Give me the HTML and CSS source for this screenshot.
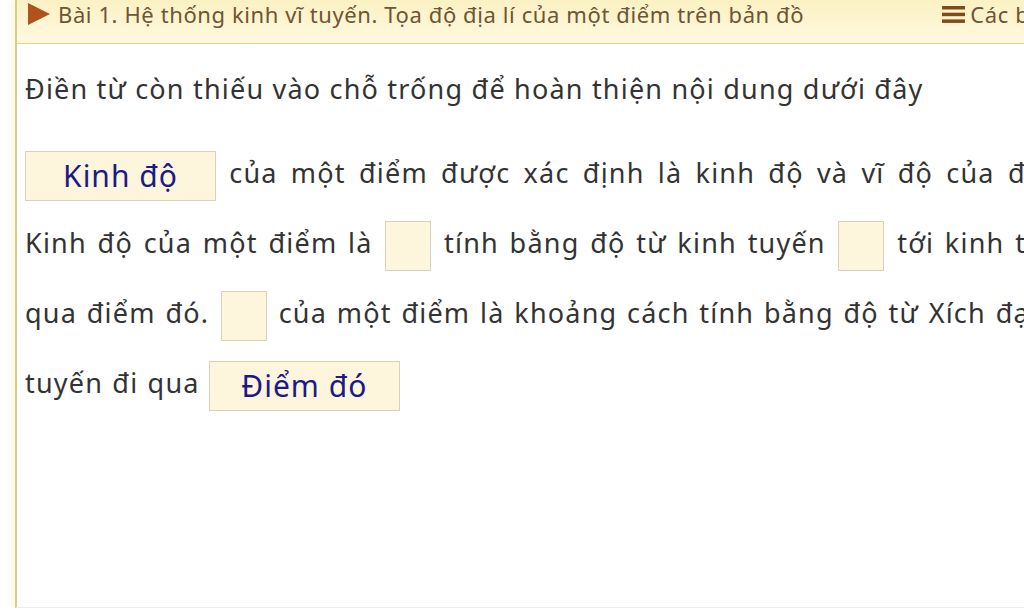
FILE: index.html
```html
<!DOCTYPE html>
<html lang="vi">
  <head>
    <meta charset="UTF-8" />
    <title>Bài 1. Hệ thống kinh vĩ tuyến</title>
    <link rel="stylesheet" href="styles.css">
  </head>
  <body>
    <div class="panel">
      <header class="panel-head">
        <svg class="play" width="22" height="22" viewBox="0 0 22 22">
          <polygon points="0,0 22,11 0,22" fill="#b0521c" />
        </svg>
        <div class="titulo">Bài 1. Hệ thống kinh vĩ tuyến. Tọa độ địa lí của một điểm trên bản đồ</div>
        <div class="menu">
          <svg width="23" height="17" viewBox="0 0 23 17">
            <rect x="0" y="0" width="23" height="3.5" fill="#7f4a1c" />
            <rect x="0" y="6.7" width="23" height="3.5" fill="#7f4a1c" />
            <rect x="0" y="13.4" width="23" height="3.5" fill="#7f4a1c" />
          </svg>
          <span>Các bài học</span>
        </div>
      </header>

      <div class="panel-body">
        <p class="pergunta">Điền từ còn thiếu vào chỗ trống để hoàn thiện nội dung dưới đây</p>

        <!-- linhas justificadas, cada uma com seu espaçamento -->
        <p class="texto">
          <span class="l1"><span class="lacuna cheia">Kinh độ</span> của một điểm được xác định là kinh độ và vĩ độ của điểm đó.</span><br>
          <span class="l2">Kinh độ của một điểm là <span class="lacuna"></span> tính bằng độ từ kinh tuyến <span class="lacuna"></span> tới kinh tuyến đi</span><br>
          <span class="l3">qua điểm đó. <span class="lacuna"></span> của một điểm là khoảng cách tính bằng độ từ Xích đạo đến vĩ</span><br>
          <span class="l4">tuyến đi qua <span class="lacuna cheia">Điểm đó</span></span>
        </p>
      </div>
    </div>
  </body>
</html>
```

FILE: styles.css
```css
body {
  margin: 0;
  font-family: "Noto Sans", sans-serif;
  background: #fff;
  overflow: hidden;
}
.panel {
  margin-left: 15px;
  width: 1200px;
  height: 607px;
  border-left: 2px solid #d5cd8e;
  border-bottom: 1px solid #ececec;
  box-shadow: -5px 0 6px #fdf9e0;
}
.panel-head {
  display: flex;
  align-items: flex-start;
  height: 43px;
  padding-left: 11px;
  border-bottom: 1px solid #e4d57f;
  background: linear-gradient(#fcf1c4, #fef9df);
  color: #6f5533;
  font-size: 22px;
  line-height: 28px;
  letter-spacing: 0.6px;
}
.play {
  margin-top: 3px;
}
.titulo {
  margin-left: 8px;
}
.menu {
  display: flex;
  align-items: center;
  gap: 5px;
  margin-left: 138px;
}
.panel-body {
  padding-left: 8px;
  color: #333;
  font-size: 27px;
  letter-spacing: 1.2px;
}
.pergunta {
  margin: 25px 0 0;
  line-height: 40px;
}
.texto {
  margin: 29px 0 0;
  line-height: 70px;
  white-space: nowrap;
}
.l1 {
  word-spacing: 5px;
}
.l2 {
  word-spacing: 2.5px;
}
.l3 {
  word-spacing: 1.5px;
}
.l4 {
  word-spacing: 1px;
}
.lacuna {
  display: inline-block;
  box-sizing: border-box;
  width: 46px;
  height: 50px;
  vertical-align: middle;
  background: #fdf6dc;
  border: 1px solid #d8d2bb;
  margin: 0 2px;
}
.cheia {
  width: 191px;
  line-height: 48px;
  text-align: center;
  color: #1c1a88;
  font-size: 30px;
  letter-spacing: 1px;
  word-spacing: 0;
  margin: 0;
}
```
